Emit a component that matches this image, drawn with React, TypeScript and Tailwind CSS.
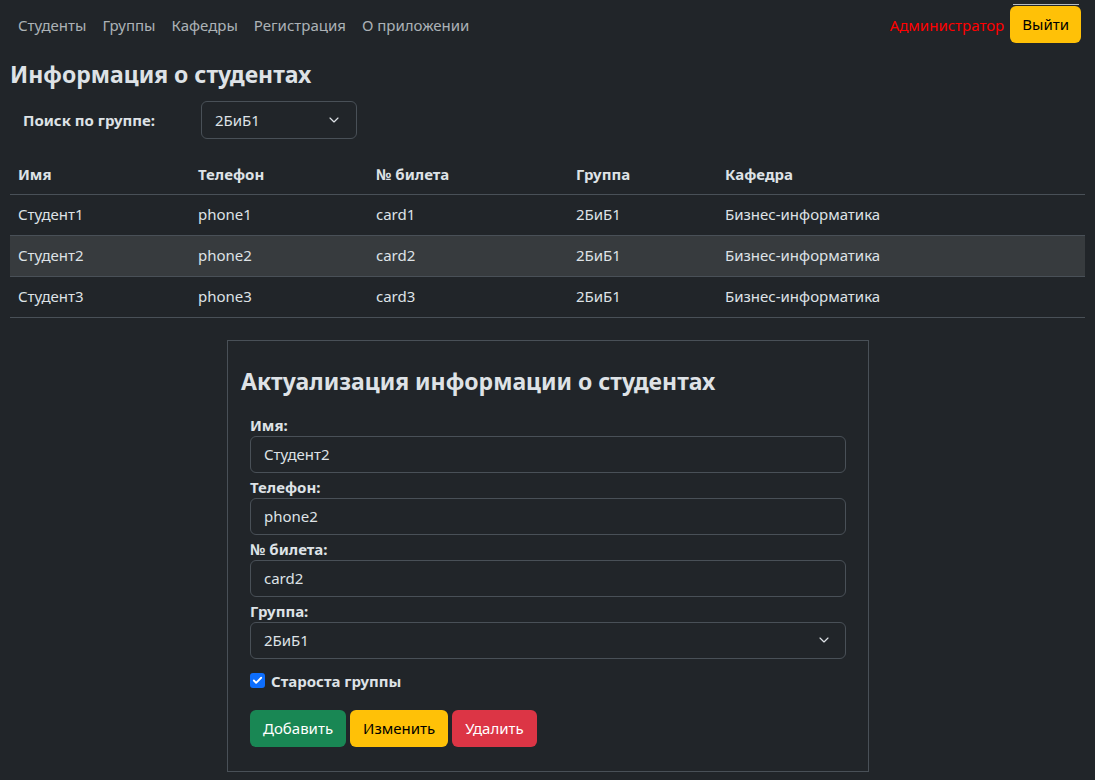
import { ChevronDown, Check } from "lucide-react";

const students = [
  { name: "Студент1", phone: "phone1", card: "card1", group: "2БиБ1", dept: "Бизнес-информатика" },
  { name: "Студент2", phone: "phone2", card: "card2", group: "2БиБ1", dept: "Бизнес-информатика" },
  { name: "Студент3", phone: "phone3", card: "card3", group: "2БиБ1", dept: "Бизнес-информатика" },
];

const fields = [
  { label: "Имя:", value: "Студент2" },
  { label: "Телефон:", value: "phone2" },
  { label: "№ билета:", value: "card2" },
];

export default function App() {
  return (
    <div
      className="min-h-screen bg-[#212529] text-[#dee2e6] text-[15px] leading-[1.5]"
      style={{ fontFamily: '"Noto Sans", "Open Sans", sans-serif' }}
    >
      {/* Navbar */}
      <nav className="flex items-center justify-between h-[50px] pl-[10px] pr-[14px]">
        <div className="flex">
          {["Студенты", "Группы", "Кафедры", "Регистрация", "О приложении"].map((l) => (
            <a key={l} className="px-2 text-[#dee2e6]/75 cursor-pointer">
              {l}
            </a>
          ))}
        </div>
        <div className="flex items-center gap-[6px] -mt-[4px]">
          <span className="text-[#ff0000] mt-[4px]">Администратор</span>
          <div className="flex flex-col items-center">
            <div className="h-px w-[66px] bg-[#dee2e6]/80 mb-[1px]" />
            <button className="bg-[#ffc107] text-black rounded-[6px] px-3 h-[37px]">Выйти</button>
          </div>
        </div>
      </nav>

      <main className="px-[10px]">
        <h1 className="text-[23px] font-bold leading-none mt-[13px] mb-[15px]">Информация о студентах</h1>

        <div className="flex items-center mb-[15px]">
          <label className="font-bold w-[191px] pl-[13px]">Поиск по группе:</label>
          <div className="w-[156px] h-[38px] border border-[#495057] rounded-[6px] flex items-center justify-between pl-[13px] pr-[14px]">
            <span>2БиБ1</span>
            <ChevronDown className="w-4 h-4" strokeWidth={1.75} />
          </div>
        </div>

        <table className="w-full border-collapse">
          <thead>
            <tr className="border-b border-[#495057]">
              <th className="text-left font-bold px-2 h-[40px] w-[180px]">Имя</th>
              <th className="text-left font-bold px-2 w-[178px]">Телефон</th>
              <th className="text-left font-bold px-2 w-[200px]">№ билета</th>
              <th className="text-left font-bold px-2 w-[149px]">Группа</th>
              <th className="text-left font-bold px-2">Кафедра</th>
            </tr>
          </thead>
          <tbody>
            {students.map((s, i) => (
              <tr key={s.name} className={`border-b border-[#495057] ${i === 1 ? "bg-[#373b3e]" : ""}`}>
                <td className="px-2 h-[41px]">{s.name}</td>
                <td className="px-2">{s.phone}</td>
                <td className="px-2">{s.card}</td>
                <td className="px-2">{s.group}</td>
                <td className="px-2">{s.dept}</td>
              </tr>
            ))}
          </tbody>
        </table>

        {/* Edit form */}
        <div className="w-[642px] ml-[217px] mt-[22px] border border-[#495057] pt-[29px] pb-[24px]">
          <h2 className="text-[23px] font-bold leading-none pl-[13px] mb-[21px]">
            Актуализация информации о студентах
          </h2>
          <div className="px-[22px]">
            {fields.map((f) => (
              <div key={f.label} className="mb-[3px]">
                <div className="font-bold leading-[22px]">{f.label}</div>
                <div className="h-[37px] border border-[#495057] rounded-[6px] flex items-center px-[13px]">
                  {f.value}
                </div>
              </div>
            ))}
            <div>
              <div className="font-bold leading-[22px]">Группа:</div>
              <div className="h-[37px] border border-[#495057] rounded-[6px] flex items-center justify-between px-[13px]">
                <span>2БиБ1</span>
                <ChevronDown className="w-4 h-4" strokeWidth={1.75} />
              </div>
            </div>
            <div className="flex items-center gap-[6px] mt-[11px]">
              <span className="w-[15px] h-[15px] rounded-[3px] bg-[#0d6efd] flex items-center justify-center">
                <Check className="w-[11px] h-[11px] text-white" strokeWidth={4} />
              </span>
              <span className="font-bold">Староста группы</span>
            </div>
            <div className="flex gap-[4px] mt-[18px]">
              <button className="bg-[#198754] text-white rounded-[6px] h-[37px] px-[13px]">Добавить</button>
              <button className="bg-[#ffc107] text-black rounded-[6px] h-[37px] px-[13px]">Изменить</button>
              <button className="bg-[#dc3545] text-white rounded-[6px] h-[37px] px-[13px]">Удалить</button>
            </div>
          </div>
        </div>
      </main>
    </div>
  );
}
